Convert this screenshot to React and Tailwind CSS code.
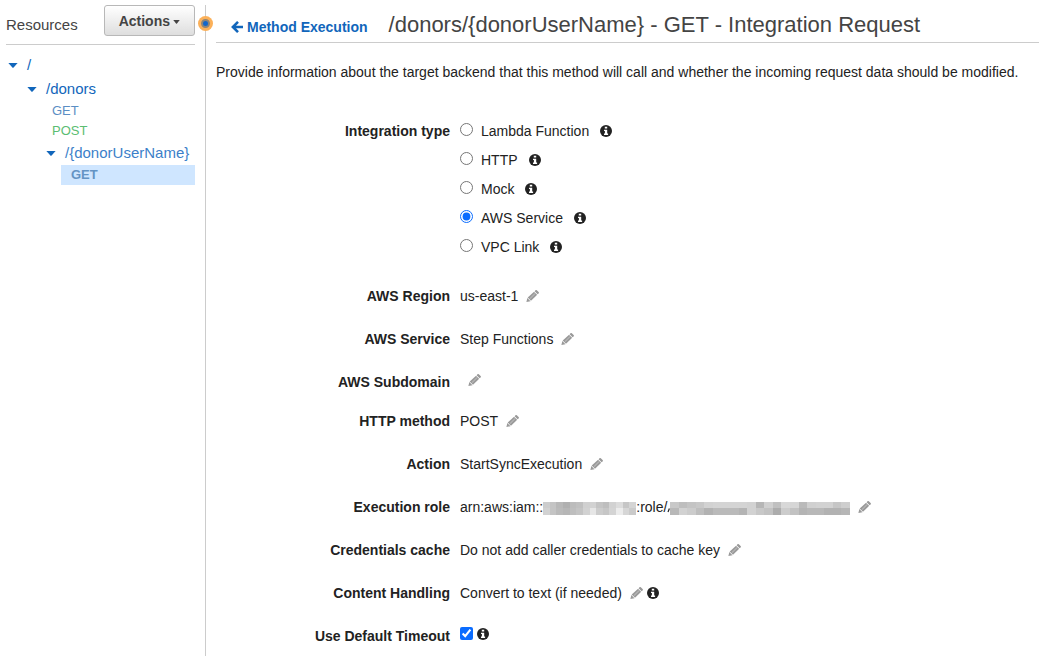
const integrationTypes = ["Lambda Function", "HTTP", "Mock", "AWS Service", "VPC Link"];

const accountMask = [
  ["#cdcdcd", "#c4c4c4", "#b8b8b8", "#b0b0b0", "#bcbcbc", "#c0c0c0", "#d0d0d0", "#d2d2d2", "#c4c4c4", "#bebebe", "#d2d2d2", "#dcdcdc", "#c6c6c6", "#d4d4d4"],
  ["#d2d2d2", "#c4c4c4", "#bababa", "#b6b6b6", "#bebebe", "#c4c4c4", "#d2d2d2", "#e6e6e6", "#cccccc", "#c6c6c6", "#d4d4d4", "#ececec", "#d6d6d6", "#cacaca"],
];

const roleMask = [
  ["#c8c8c8", "#bebebe", "#c4c4c4", "#c8c8c8", "#d2d2d2", "#d4d4d4", "#d4d4d4", "#d4d4d4", "#d4d4d4", "#d2d2d2", "#b6b6b6", "#d0d0d0", "#c0c0c0", "#d8d8d8", "#d6d6d6", "#bababa", "#d0d0d0", "#d2d2d2", "#d2d2d2", "#c6c6c6", "#cecece"],
  ["#b8b8b8", "#d2d2d2", "#cccccc", "#bebebe", "#b2b2b2", "#bababa", "#bababa", "#bababa", "#b4b4b4", "#d2d2d2", "#c8c8c8", "#c2c2c2", "#acacac", "#cccccc", "#c2c2c2", "#b4b4b4", "#b8b8b8", "#b8b8b8", "#b2b2b2", "#b2b2b2", "#b6b6b6"],
];

// Blocky cover over the hidden part of an ARN
function Mask({ rows, width, className }) {
  const cell = width / rows[0].length;
  return (
    <svg className={`mt-[2px] h-[13px] ${className}`} viewBox={`0 0 ${width} 13`} preserveAspectRatio="none" aria-hidden="true">
      {rows.map((row, y) =>
        row.map((fill, x) => (
          <rect key={`${x}-${y}`} x={Math.round(x * cell)} y={y * 6} width={Math.ceil(cell)} height={7} fill={fill} />
        ))
      )}
    </svg>
  );
}

function Caret({ className = "h-[5px] w-[10px]" }) {
  return (
    <svg className={`shrink-0 ${className}`} viewBox="0 0 10 5" preserveAspectRatio="none" fill="currentColor" aria-hidden="true">
      <path d="M0.4 0h9.2L5.4 4.8h-.8z" />
    </svg>
  );
}

function ArrowLeft() {
  return (
    <svg className="size-3 shrink-0" viewBox="0 0 12 12" fill="none" stroke="currentColor" strokeWidth="2.6" aria-hidden="true">
      <path d="M12 6H2.2M7 .9 1.9 6 7 11.1" />
    </svg>
  );
}

function Pencil() {
  return (
    <svg className="h-3 w-[13px]" viewBox="0 0 13 12" fill="currentColor" aria-hidden="true">
      <path d="M9.5.3a.9.9 0 0 1 1.3 0l1.8 1.8a.9.9 0 0 1 0 1.3l-1 .9-3-3z" />
      <path d="M8.1 1.7l3.1 3.1-6.2 6-3.3-3.2z" />
      <path d="M1.3 8.1l3.2 3.1L.4 12z" />
      <path d="M8.6 3.3l.8.8-5 4.9-.8-.8z" fill="#fff" fillOpacity=".3" />
      <path d="M8.2 1.6l3.2 3.2" stroke="#fff" strokeOpacity=".55" strokeWidth=".5" />
    </svg>
  );
}

function Info() {
  return (
    <svg className="size-3 shrink-0 text-[#222]" viewBox="0 0 12 12" aria-hidden="true">
      <circle cx="6" cy="6" r="6" fill="currentColor" />
      <path d="M4.8 1.7h2.4v1.8H4.8zM4 4.7h3.2v3.8h.9v1.4H4V8.500h.9V6H4z" fill="#fff" />
    </svg>
  );
}

function EditButton({ label }) {
  return (
    <button type="button" aria-label={`Edit ${label}`} className="ml-2 cursor-pointer text-[#999]">
      <Pencil />
    </button>
  );
}

function Row({ label, htmlFor, className = "mb-[23px]", valueClassName = "", children }) {
  return (
    <div className={`flex gap-[10px] ${className}`}>
      {htmlFor ? (
        <label htmlFor={htmlFor} className="w-[234px] shrink-0 text-right font-bold">{label}</label>
      ) : (
        <div className="w-[234px] shrink-0 text-right font-bold">{label}</div>
      )}
      <div className={`flex min-w-0 items-center ${valueClassName}`}>{children}</div>
    </div>
  );
}

function Sidebar() {
  return (
    <aside className="relative mt-[5px] w-[206px] shrink-0 border-r border-[#ccc] pr-[10px] pl-[6px]">
      <div className="flex items-start justify-between border-b border-[#ccc] pb-2">
        <h2 className="pt-[10px] text-[15px] text-[#444]">Resources</h2>
        <button
          type="button"
          className="flex h-[31px] cursor-pointer items-center gap-[3px] rounded-[3px] border border-[#b8b8b8] bg-linear-to-b from-white to-[#dedede] px-[14px] text-[14px] font-bold text-[#444]"
        >
          Actions
          <Caret className="mt-[2px] h-1 w-[7px]" />
        </button>
      </div>
      <span className="absolute top-[11px] -right-2 flex size-[15px] items-center justify-center rounded-full bg-[#fbb059]">
        <span className="size-[9px] rounded-full border-2 border-[#8d8578] bg-[#1166cc]" />
      </span>

      <nav className="pt-2 text-[15px] leading-6 text-[#1166bb]">
        <a href="#root" className="flex items-center gap-[9px] pl-[2px]">
          <Caret />/
        </a>
        <a href="#donors" className="flex items-center gap-[9px] pl-[21px]">
          <Caret />/donors
        </a>
        <a href="#donors-get" className="block pl-[46px] text-[13px] leading-5 text-[#5b8ec4]">GET</a>
        <a href="#donors-post" className="block pl-[46px] text-[13px] leading-5 text-[#5bbd72]">POST</a>
        <a href="#donor" className="flex items-center gap-[9px] pl-10 text-[#3c7fc9]">
          <Caret className="h-[5px] w-[10px] text-[#1166bb]" />/{"{donorUserName}"}
        </a>
        <a href="#donor-get" className="ml-[55px] block bg-[#cfe6ff] pl-[10px] text-[13px] leading-5 font-bold text-[#6494c4]">GET</a>
      </nav>
    </aside>
  );
}

export default function App() {
  return (
    <div className="flex min-h-screen bg-white font-['Liberation_Sans',Arial,sans-serif] text-[14px] leading-5 text-[#222]">
      <Sidebar />

      <main className="min-w-0 flex-1 pl-[10px]">
        <header className="flex items-end gap-[21px] border-b border-[#ccc] pt-3 pb-[5px] pl-[15px]">
          <a href="#method" className="flex items-center gap-1 font-bold whitespace-nowrap text-[#1166bb]">
            <ArrowLeft />
            Method Execution
          </a>
          <h1 className="text-[22px] leading-[25px] whitespace-nowrap text-[#444]">
            {"/donors/{donorUserName} - GET - Integration Request"}
          </h1>
        </header>

        <p className="pt-[19px] whitespace-nowrap">
          Provide information about the target backend that this method will call and whether the incoming request data should be modified.
        </p>

        <form className="pt-[39px]">
          <fieldset className="mb-[29px] flex gap-[10px]" aria-labelledby="integration-type">
            <div id="integration-type" className="w-[234px] shrink-0 text-right font-bold">Integration type</div>
            <div className="flex flex-col gap-[9px]">
              {integrationTypes.map((type) => (
                <div key={type} className="flex items-center">
                  <label className="flex items-center gap-2">
                    <input type="radio" name="type" defaultChecked={type === "AWS Service"} className="mb-[3px] size-[13px] accent-[#0a6cff]" />
                    {type}
                  </label>
                  <span className="ml-[11px]"><Info /></span>
                </div>
              ))}
            </div>
          </fieldset>

          <Row label="AWS Region">us-east-1<EditButton label="AWS Region" /></Row>
          <Row label="AWS Service">Step Functions<EditButton label="AWS Service" /></Row>
          <Row label="AWS Subdomain" className="mb-[19px]" valueClassName="pb-1"><EditButton label="AWS Subdomain" /></Row>
          <Row label="HTTP method">POST<EditButton label="HTTP method" /></Row>
          <Row label="Action">StartSyncExecution<EditButton label="Action" /></Row>
          <Row label="Execution role">
            arn:aws:iam::
            <Mask rows={accountMask} width={93} className="w-[93px]" />
            :role/
            <svg className="h-[13px] w-[3px]" viewBox="0 0 3 13" aria-hidden="true">
              <path d="M1 11 2.4 7.5" stroke="#222" strokeWidth="1.2" />
            </svg>
            <Mask rows={roleMask} width={180} className="w-[180px]" />
            <EditButton label="Execution role" />
          </Row>
          <Row label="Credentials cache">Do not add caller credentials to cache key<EditButton label="Credentials cache" /></Row>
          <Row label="Content Handling">
            Convert to text (if needed)
            <EditButton label="Content Handling" />
            <span className="ml-1"><Info /></span>
          </Row>
          <Row label="Use Default Timeout" htmlFor="timeout" className="" valueClassName="pb-1">
            <input id="timeout" type="checkbox" defaultChecked className="mr-1 mb-[2px] size-[13px] accent-[#0a6cff]" />
            <Info />
          </Row>
        </form>
      </main>
    </div>
  );
}
